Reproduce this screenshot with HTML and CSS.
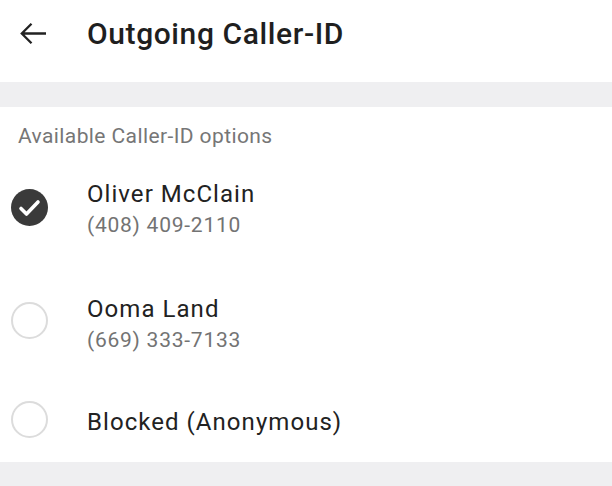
FILE: index.html
```html
<!DOCTYPE html>
<html lang="en">
<head>
<meta charset="utf-8">
<title>Outgoing Caller-ID</title>
<link rel="stylesheet" href="styles.css">
</head>
<body>
<header class="header">
  <svg class="back" width="27" height="23" viewBox="0 0 27 23" aria-hidden="true">
    <path d="M26 11.5H2.5M11.5 1.8L1.8 11.5l9.7 9.7" fill="none" stroke="#222" stroke-width="2.3" stroke-linecap="butt" stroke-linejoin="miter"/>
  </svg>
  <h1 class="title">Outgoing Caller-ID</h1>
</header>
<div class="band"></div>
<section class="options">
  <div class="section-label">Available Caller-ID options</div>
  <div class="option option-first">
    <span class="radio radio-checked">
      <svg width="37" height="37" viewBox="0 0 37 37" aria-hidden="true">
        <circle cx="18.5" cy="18.5" r="18.5" fill="#3a3a3a"/>
        <path d="M10 19.5l5.5 5.5L27 13" fill="none" stroke="#fff" stroke-width="3.6" stroke-linecap="round" stroke-linejoin="round"/>
      </svg>
    </span>
    <div class="option-text">
      <div class="name">Oliver McClain</div>
      <div class="number">(408) 409-2110</div>
    </div>
  </div>
  <div class="option option-second">
    <span class="radio"></span>
    <div class="option-text">
      <div class="name">Ooma Land</div>
      <div class="number">(669) 333-7133</div>
    </div>
  </div>
  <div class="option option-single">
    <span class="radio"></span>
    <div class="option-text">
      <div class="name">Blocked (Anonymous)</div>
    </div>
  </div>
</section>
<div class="band band-bottom"></div>
</body>
</html>
```
FILE: styles.css
```css
html, body {
  margin: 0;
  padding: 0;
  background: #ffffff;
  font-family: Roboto, "Liberation Sans", Arial, sans-serif;
  color: #222222;
}

.header {
  height: 82px;
  box-sizing: border-box;
  display: flex;
  align-items: flex-start;
  padding: 22px 0 0 20px;
}

.back {
  display: block;
}

.title {
  margin: -6px 0 0 40px;
  font-size: 30px;
  line-height: 35px;
  font-weight: 500;
  color: #1f1f1f;
  letter-spacing: 0.6px;
}

.band {
  height: 25px;
  background: #efeff1;
}

.band-bottom {
  height: 24px;
}

.options {
  height: 355px;
  box-sizing: border-box;
  padding-top: 16px;
}

.section-label {
  padding-left: 18px;
  font-size: 21px;
  line-height: 26px;
  color: #767676;
  letter-spacing: 0.4px;
}

.option {
  display: flex;
  align-items: flex-start;
  padding-left: 11px;
}

.option-first {
  margin-top: 30px;
  height: 115px;
}

.option-second {
  height: 113px;
}

.radio {
  width: 37px;
  height: 37px;
  box-sizing: border-box;
  border-radius: 50%;
  border: 2px solid #dcdcdc;
  margin-top: 8px;
  flex: none;
}

.radio-checked {
  border: none;
  margin-top: 10px;
}

.radio-checked svg {
  display: block;
}

.option-single .radio {
  margin-top: -6px;
}

.option-text {
  margin-left: 39px;
}

.name {
  font-size: 24px;
  line-height: 30px;
  color: #222222;
  letter-spacing: 1.05px;
}

.number {
  margin-top: 1px;
  font-size: 21px;
  line-height: 30px;
  color: #737373;
  letter-spacing: 0.75px;
}
```
